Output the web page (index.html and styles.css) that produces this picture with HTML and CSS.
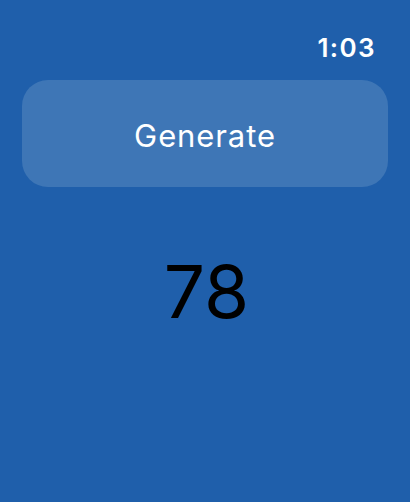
FILE: index.html
```html
<!DOCTYPE html>
<html lang="en">
<head>
<meta charset="UTF-8">
<title>Random Number</title>
<meta name="viewport" content="width=device-width, initial-scale=1.0">
<link rel="stylesheet" href="styles.css">
</head>
<body>
 <div class="screen">
  <div class="status">
   <span class="time">1:03</span>
  </div>

  <button class="generate">Generate</button>

  <div class="result">78</div>
 </div>
</body>
</html>
```

FILE: styles.css
```css
html,body{margin:0;padding:0;height:100%}
body{background:#1f5fab;font-family:Inter,"Open Sans",Roboto,sans-serif;color:#fff}
.screen{display:flex;flex-direction:column;height:100%}
.status{display:flex;justify-content:flex-end;height:80px;box-sizing:border-box;padding:33px 34px 0 0}
.time{font-size:26px;font-weight:600;line-height:30px;letter-spacing:1.4px}
.generate{margin:0 22px;height:107px;border:none;border-radius:26px;background:#3e76b6;color:#fff;font-family:inherit;font-size:31px;font-weight:400;letter-spacing:.9px;padding-top:4px;cursor:pointer}
.result{text-align:center;color:#000;font-size:73px;font-weight:400;line-height:90px;margin-top:60px;padding-left:3px}
```
